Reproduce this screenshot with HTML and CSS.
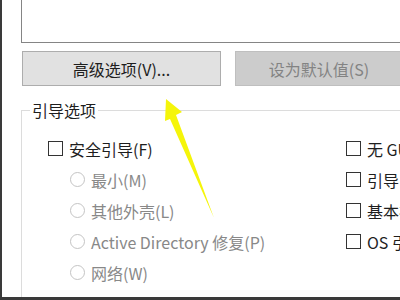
FILE: index.html
```html
<!DOCTYPE html>
<html lang="zh-CN">
<head>
<meta charset="utf-8">
<link rel="stylesheet" href="styles.css">
</head>
<body>
<div class="screen">
  <div class="textbox"></div>
  <div class="buttons">
    <div class="btn">高级选项(V)...</div>
    <div class="btn disabled">设为默认值(S)</div>
  </div>
  <fieldset class="group">
    <legend>引导选项</legend>
    <div class="cols">
      <div class="col left">
        <div class="row"><span class="check"></span><span class="label">安全引导(F)</span></div>
        <div class="row sub"><span class="radio"></span><span class="label dim">最小(M)</span></div>
        <div class="row sub"><span class="radio"></span><span class="label dim">其他外壳(L)</span></div>
        <div class="row sub"><span class="radio"></span><span class="label dim">Active Directory 修复(P)</span></div>
        <div class="row sub"><span class="radio"></span><span class="label dim">网络(W)</span></div>
      </div>
      <div class="col right">
        <div class="row"><span class="check"></span><span class="label">无 GUI 引导(N)</span></div>
        <div class="row"><span class="check"></span><span class="label">引导日志(B)</span></div>
        <div class="row"><span class="check"></span><span class="label">基本视频(E)</span></div>
        <div class="row"><span class="check"></span><span class="label">OS 引导信息(O)</span></div>
      </div>
    </div>
  </fieldset>
  <svg class="arrow" width="400" height="300" viewBox="0 0 400 300">
    <polygon points="166,99 182,112 176,115 214,218 170,119 165,121" fill="#f5f50a"/>
  </svg>
</div>
</body>
</html>
```
FILE: styles.css
```css
* { box-sizing: border-box; }
html, body { margin: 0; padding: 0; background: #ffffff; }
.screen {
  position: relative;
  width: 400px;
  height: 300px;
  overflow: hidden;
  background: #ffffff;
  border-left: 2px solid #3a3a3a;
  border-bottom: 3px solid #3a3a3a;
  display: flex;
  flex-direction: column;
  font-family: "Noto Sans CJK SC", "Noto Sans", sans-serif;
  font-size: 16px;
  color: #1e1e1e;
}
.textbox {
  flex: none;
  margin-left: 19px;
  height: 43px;
  border-left: 1px solid #858585;
  border-bottom: 1px solid #858585;
}
.buttons {
  flex: none;
  display: flex;
  gap: 14px;
  margin-top: 8px;
  padding-left: 20px;
}
.btn {
  flex: none;
  width: 199px;
  height: 35px;
  background: #e1e1e1;
  border: 1px solid #adadad;
  display: flex;
  align-items: center;
  justify-content: center;
  color: #1e1e1e;
  line-height: 1;
}
.btn.disabled {
  width: 168px;
  background: #cccccc;
  border-color: #bfbfbf;
  color: #838383;
}
.group {
  flex: none;
  margin: 14px 0 0 19px;
  padding: 0 0 0 8px;
  border: 1px solid #dcdcdc;
  border-right: none;
  height: 220px;
  min-width: 0;
}
.group legend {
  padding: 0 2px;
  line-height: 20px;
  color: #1e1e1e;
}
.cols {
  display: flex;
  padding-top: 13px;
  padding-left: 18px;
}
.col { flex: none; display: flex; flex-direction: column; }
.col.left { width: 298px; }
.col.right { width: 120px; }
.row {
  height: 31px;
  display: flex;
  align-items: center;
  white-space: nowrap;
}
.row.sub { padding-left: 22px; }
.check {
  flex: none;
  width: 15px;
  height: 15px;
  border: 1px solid #333333;
  background: #ffffff;
  margin-right: 6px;
}
.radio {
  flex: none;
  width: 15px;
  height: 15px;
  border: 1px solid #c4c4c4;
  border-radius: 50%;
  background: #ffffff;
  margin-right: 6px;
}
.label { line-height: 1; }
.label.dim { color: #888888; }
.arrow {
  position: absolute;
  left: -2px;
  top: 0;
  pointer-events: none;
}
```
